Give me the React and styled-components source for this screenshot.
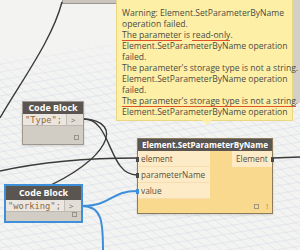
import React from 'react'
import styled, { createGlobalStyle } from 'styled-components'

const Global = createGlobalStyle`
  html, body { margin: 0; padding: 0; background: #f3f3f3; }
  * { box-sizing: border-box; }
`

const Canvas = styled.div`
  position: relative;
  width: 300px;
  height: 250px;
  overflow: hidden;
  background: #f3f3f2;
  font-family: "Open Sans", "Noto Sans", sans-serif;
`

const Layer = styled.svg`
  position: absolute;
  left: 0;
  top: 0;
`

const Node = styled.div`
  position: absolute;
  left: ${p => p.x}px;
  top: ${p => p.y}px;
  width: ${p => p.w}px;
  height: ${p => p.h}px;
  display: flex;
  flex-direction: column;
  background: ${p => p.yellow ? '#f9d98e' : '#d1ccc4'};
  border: 1px solid ${p => p.selected ? '#3d8fd9' : p.yellow ? '#8c7c5c' : '#9e9890'};
  box-shadow: ${p => p.selected ? '0 0 0 1px #3d8fd9' : '0 1px 2px rgba(0,0,0,0.15)'};
`

const Header = styled.div`
  height: ${p => p.h || 12}px;
  background: #5a5550;
  color: #fff;
  font-weight: 700;
  font-size: ${p => p.fs || 9}px;
  line-height: ${p => p.h || 12}px;
  text-align: center;
  white-space: nowrap;
  overflow: hidden;
`

const CodeRow = styled.div`
  display: flex;
  height: 12px;
  border-bottom: 1px solid #bdb8b0;
`

const Code = styled.div`
  flex: 1;
  background: #ebe7e0;
  color: #8f6a3e;
  font-family: "DejaVu Sans Mono", "Liberation Mono", monospace;
  font-size: 8.8px;
  line-height: 12px;
  padding-left: 2px;
  border-right: 1px solid #c3beb6;
  white-space: nowrap;
`

const OutPort = styled.div`
  width: 16px;
  background: #e2ddd5;
  color: #666;
  font-size: 8px;
  line-height: 12px;
  padding-left: 4px;
`

const Body = styled.div`
  flex: 1;
  position: relative;
`

const Square = styled.div`
  position: absolute;
  right: ${p => p.r}px;
  bottom: ${p => p.b}px;
  width: 5px;
  height: 5px;
  border: 1px solid #8a857e;
  opacity: 0.8;
`

const Bang = styled.div`
  position: absolute;
  right: 4px;
  bottom: 3px;
  color: #8a7a55;
  font-size: 7px;
  line-height: 7px;
`

const Ports = styled.div`
  display: flex;
  justify-content: space-between;
`

const InCol = styled.div`
  display: flex;
  flex-direction: column;
  width: 72px;
`

const Port = styled.div`
  position: relative;
  height: 16px;
  background: #fcebc6;
  border-bottom: 1px solid #f6ddb0;
  color: #5a5040;
  font-size: 8.3px;
  line-height: 16px;
  padding-left: 3px;
  white-space: nowrap;
  &::before {
    content: '';
    position: absolute;
    left: -2px;
    top: 6px;
    width: 3px;
    height: 5px;
    background: ${p => p.blue ? '#3d8fd9' : '#4a4a4a'};
  }
`

const OutLabel = styled.div`
  position: relative;
  width: 40px;
  height: 16px;
  background: #fcebc6;
  color: #5a5040;
  font-size: 8.3px;
  line-height: 16px;
  padding-left: 4px;
  white-space: nowrap;
  &::after {
    content: '';
    position: absolute;
    right: -2px;
    top: 6px;
    width: 3px;
    height: 5px;
    background: #4a4a4a;
  }
`

const Tip = styled.div`
  position: absolute;
  left: 116px;
  top: -2px;
  width: 177px;
  height: 123px;
  background: #fdf0a6;
  border: 1px solid #ead77f;
  padding: 9px 0 0 5px;
  color: #4b4b45;
  font-size: 8.6px;
  line-height: 11px;
  &::after {
    content: '';
    position: absolute;
    left: 85px;
    bottom: -5px;
    border-left: 5px solid transparent;
    border-right: 5px solid transparent;
    border-top: 5px solid #fdf0a6;
  }
`

const Line = styled.div`
  white-space: nowrap;
  height: 11px;
`

const Err = styled.span`
  display: inline-block;
  vertical-align: top;
  height: 11px;
  line-height: 10px;
  box-shadow: inset 0 -1px 0 #e0522a;
`

const TopBox = styled.div`
  position: absolute;
  left: 62px;
  top: -10px;
  width: 70px;
  height: 14px;
  background: #cac6bf;
  border: 1px solid #9a958d;
  border-top: none;
`

const RightBox = styled.div`
  position: absolute;
  left: 292px;
  top: -2px;
  width: 12px;
  height: 105px;
  background: #d4d0c9;
  border-left: 1px solid #aaa59d;
`

function Grid() {
  const lines = []
  for (let i = -40; i < 60; i++) {
    const y = 40 + i * 8
    lines.push(<line key={'a' + i} x1={0} y1={y} x2={300} y2={y - 50} />)
  }
  for (let i = -40; i < 60; i++) {
    const x = -200 + i * 11
    lines.push(<line key={'b' + i} x1={x} y1={20} x2={x + 300} y2={250} />)
  }
  return (
    <Layer width="300" height="250">
      <defs>
        <clipPath id="floor">
          <polygon points="0,58 120,40 300,20 300,250 0,250" />
        </clipPath>
        <linearGradient id="fade" x1="0" y1="0" x2="0" y2="1">
          <stop offset="0" stopColor="#f3f3f2" stopOpacity="1" />
          <stop offset="0.3" stopColor="#f3f3f2" stopOpacity="0" />
        </linearGradient>
      </defs>
      <g clipPath="url(#floor)" stroke="#d8dfe8" strokeWidth="0.6">
        {lines}
      </g>
      <rect x="0" y="20" width="300" height="230" fill="url(#fade)" />
    </Layer>
  )
}

function Wires() {
  return (
    <Layer width="300" height="250" fill="none">
      <g stroke="#3a3a3a" strokeWidth="1.4">
        <path d="M62,2 C52,40 22,80 0,118" />
        <path d="M0,171 C50,160 100,158 137,158" />
        <path d="M84,119 C112,119 108,175 137,175" />
        <path d="M84,119 C125,121 110,160 40,190" />
        <path d="M273,158 L300,157" />
      </g>
      <g stroke="#3d8fd9" strokeWidth="2">
        <path d="M82,206 C112,206 110,191 137,191" />
        <path d="M82,206 C102,206 103,222 103,250" />
      </g>
    </Layer>
  )
}

function CodeBlock({ x, y, w, h, code, selected, hh }) {
  return (
    <Node x={x} y={y} w={w} h={h} selected={selected}>
      <Header h={hh}>Code Block</Header>
      <CodeRow>
        <Code>{code}</Code>
        <OutPort>&gt;</OutPort>
      </CodeRow>
      <Body>
        <Square r={4} b={4} />
      </Body>
    </Node>
  )
}

export default function App() {
  return (
    <>
      <Global />
      <Canvas>
        <Grid />
        <TopBox />
        <RightBox />
        <Wires />
        <CodeBlock x={22} y={101} w={62} h={44} code={'"Type";'} />
        <CodeBlock x={5} y={185} w={77} h={37} code={'"working";'} selected hh={14} />
        <Node x={137} y={138} w={136} h={76} yellow>
          <Header fs={8.1}>Element.SetParameterByName</Header>
          <Ports>
            <InCol>
              <Port>element</Port>
              <Port>parameterName</Port>
              <Port blue>value</Port>
            </InCol>
            <OutLabel>Element</OutLabel>
          </Ports>
          <Body>
            <Square r={13} b={4} />
            <Bang>!</Bang>
          </Body>
        </Node>
        <Tip>
          <Line>Warning: Element.SetParameterByName</Line>
          <Line>operation failed.</Line>
          <Line><Err>The parameter</Err> is <Err>read-only</Err>.</Line>
          <Line>Element.SetParameterByName operation</Line>
          <Line>failed.</Line>
          <Line>The parameter's storage type is not a string.</Line>
          <Line>Element.SetParameterByName operation</Line>
          <Line>failed.</Line>
          <Line><Err>The parameter's storage type is not a string</Err>.</Line>
          <Line>Element.SetParameterByName operation</Line>
        </Tip>
      </Canvas>
    </>
  )
}
